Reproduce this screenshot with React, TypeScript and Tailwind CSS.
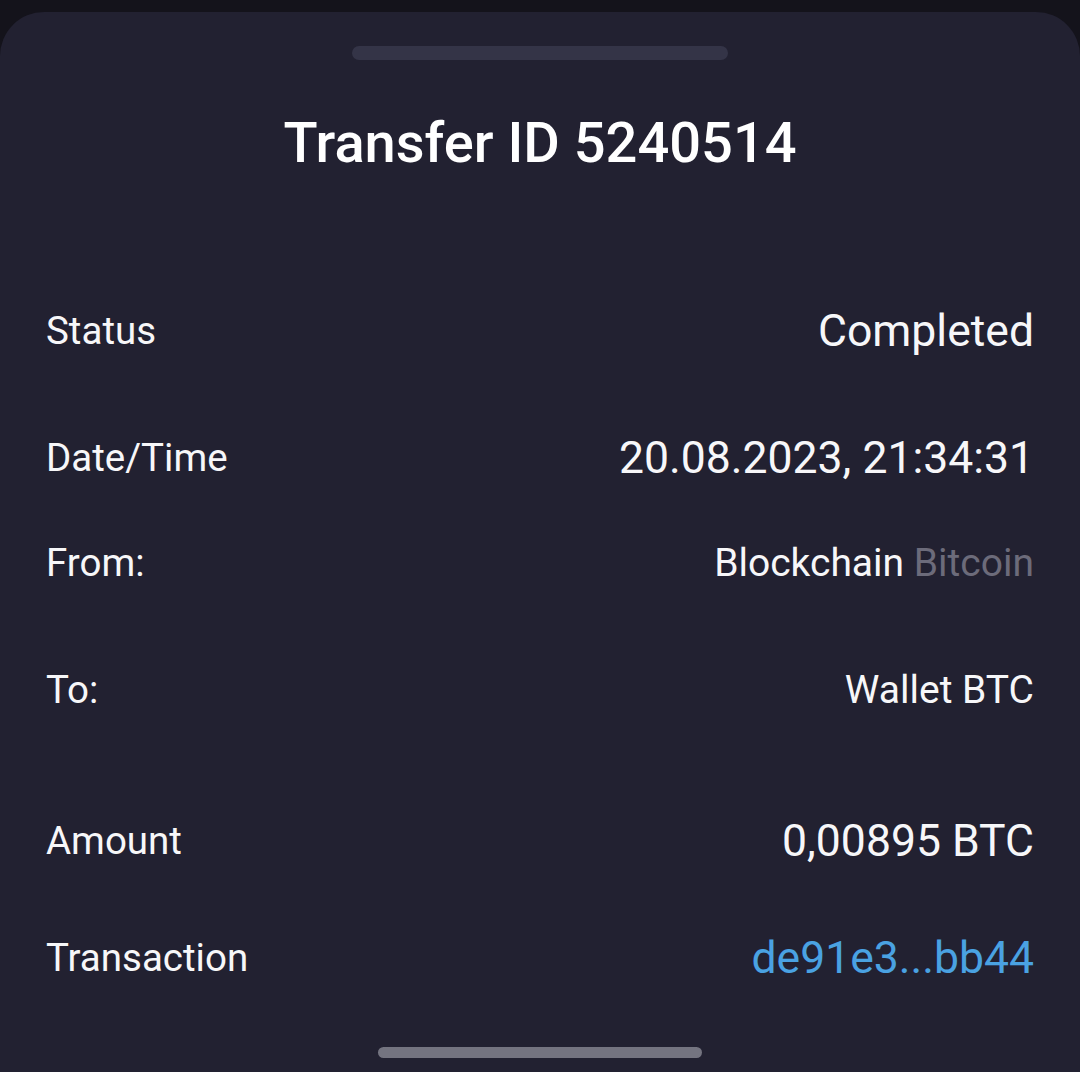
import React from 'react';

interface Row {
  label: string;
  value: React.ReactNode;
  top: string;
  small?: boolean;
}

const rows: Row[] = [
  { label: 'Status', value: 'Completed', top: 'mt-[114px]' },
  { label: 'Date/Time', value: '20.08.2023, 21:34:31', top: 'mt-[47px]' },
  {
    label: 'From:',
    value: (
      <>
        Blockchain <span className="text-[#6c6b7a]">Bitcoin</span>
      </>
    ),
    top: 'mt-[25px]',
    small: true,
  },
  { label: 'To:', value: 'Wallet BTC', top: 'mt-[47px]', small: true },
  { label: 'Amount', value: '0,00895 BTC', top: 'mt-[71px]' },
  {
    label: 'Transaction',
    value: <span className="text-[#4aa2e2]">de91e3...bb44</span>,
    top: 'mt-[37px]',
  },
];

const App = () => {
  return (
    <div
      className="h-[1072px] overflow-hidden bg-[#14131b] pt-[12px]"
      style={{ fontFamily: 'Roboto, "Noto Sans", sans-serif' }}
    >
      <div className="flex h-full flex-col rounded-t-[44px] bg-[#222131] text-[#f7f7f9]">
        {/* drag handle */}
        <div className="mx-auto mt-[34px] h-[14px] w-[376px] rounded-full bg-[#343447]" />

        <h1 className="mt-[49px] text-center text-[56px] font-medium leading-[68px] text-white">
          Transfer ID 5240514
        </h1>

        <div className="flex flex-col px-[46px]">
          {rows.map((row) => (
            <div key={row.label} className={`flex h-[80px] items-center justify-between ${row.top}`}>
              <span className="text-[38.5px]">{row.label}</span>
              <span className={row.small ? 'text-[39px]' : 'text-[44.5px]'}>{row.value}</span>
            </div>
          ))}
        </div>

        {/* home indicator */}
        <div className="mx-auto mt-[49px] h-[11px] w-[324px] rounded-full bg-[#747480]" />
      </div>
    </div>
  );
};

export default App;
